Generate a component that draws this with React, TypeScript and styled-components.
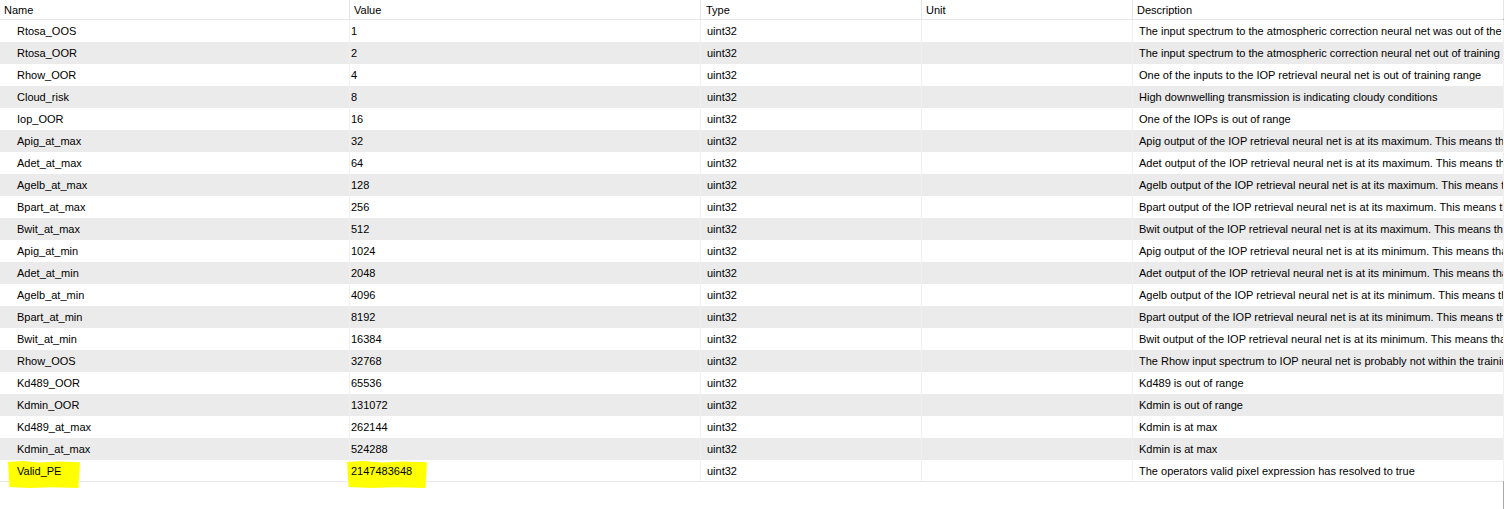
import React from "react";
import styled, { createGlobalStyle } from "styled-components";

const Global = createGlobalStyle`
  html, body { margin: 0; padding: 0; background: #ffffff; }
  body { font-family: "Liberation Sans", Arial, sans-serif; font-size: 11px; color: #000; }
`;

const Frame = styled.div`
  width: 1506px;
  height: 509px;
  display: flex;
  background: #fff;
  overflow: hidden;
`;

const Table = styled.div`
  width: 1504px;
  border-right: 1px solid #a9a9a9;
  box-sizing: border-box;
  display: flex;
  flex-direction: column;
`;

const COLS = "350px 351px 221px 211px 371px";

const HeaderRow = styled.div`
  display: grid;
  grid-template-columns: ${COLS};
  height: 20px;
  box-sizing: border-box;
  border-bottom: 1px solid #e5e5e5;
`;

const HeaderCell = styled.div<{ $pad: number }>`
  display: flex;
  align-items: center;
  padding-left: ${(p) => p.$pad}px;
  border-right: 1px solid #e5e5e5;
  white-space: nowrap;
  overflow: hidden;
`;

const Row = styled.div<{ $alt: boolean; $last: boolean }>`
  display: grid;
  grid-template-columns: ${COLS};
  height: 22px;
  box-sizing: border-box;
  background: ${(p) => (p.$alt ? "#ebebeb" : "#ffffff")};
  border-bottom: ${(p) => (p.$last ? "1px solid #e8e8e8" : "none")};
`;

const Cell = styled.div<{ $pad: number }>`
  position: relative;
  display: flex;
  align-items: center;
  padding-left: ${(p) => p.$pad}px;
  border-right: 1px solid #f0f0f0;
  white-space: nowrap;
  overflow: visible;
`;

const DescCell = styled(Cell)`
  overflow: hidden;
`;

const Text = styled.span`
  position: relative;
  z-index: 1;
`;

const Highlight = styled.span<{ $left: number; $width: number }>`
  position: absolute;
  left: ${(p) => p.$left}px;
  width: ${(p) => p.$width}px;
  top: 1px;
  height: 27px;
  background: #ffff00;
  z-index: 0;
  clip-path: polygon(0 4%, 20% 0, 45% 6%, 70% 2%, 100% 5%, 98% 100%, 60% 97%, 30% 100%, 2% 96%);
`;

type Flag = { name: string; value: string; desc: string; mark?: boolean };

const flags: Flag[] = [
  { name: "Rtosa_OOS", value: "1", desc: "The input spectrum to the atmospheric correction neural net was out of the scope of the training range and the inversion is likely to be wrong" },
  { name: "Rtosa_OOR", value: "2", desc: "The input spectrum to the atmospheric correction neural net out of training range" },
  { name: "Rhow_OOR", value: "4", desc: "One of the inputs to the IOP retrieval neural net is out of training range" },
  { name: "Cloud_risk", value: "8", desc: "High downwelling transmission is indicating cloudy conditions" },
  { name: "Iop_OOR", value: "16", desc: "One of the IOPs is out of range" },
  { name: "Apig_at_max", value: "32", desc: "Apig output of the IOP retrieval neural net is at its maximum. This means that the true value is this value or higher." },
  { name: "Adet_at_max", value: "64", desc: "Adet output of the IOP retrieval neural net is at its maximum. This means that the true value is this value or higher." },
  { name: "Agelb_at_max", value: "128", desc: "Agelb output of the IOP retrieval neural net is at its maximum. This means that the true value is this value or higher." },
  { name: "Bpart_at_max", value: "256", desc: "Bpart output of the IOP retrieval neural net is at its maximum. This means that the true value is this value or higher." },
  { name: "Bwit_at_max", value: "512", desc: "Bwit output of the IOP retrieval neural net is at its maximum. This means that the true value is this value or higher." },
  { name: "Apig_at_min", value: "1024", desc: "Apig output of the IOP retrieval neural net is at its minimum. This means that the true value is this value or lower." },
  { name: "Adet_at_min", value: "2048", desc: "Adet output of the IOP retrieval neural net is at its minimum. This means that the true value is this value or lower." },
  { name: "Agelb_at_min", value: "4096", desc: "Agelb output of the IOP retrieval neural net is at its minimum. This means that the true value is this value or lower." },
  { name: "Bpart_at_min", value: "8192", desc: "Bpart output of the IOP retrieval neural net is at its minimum. This means that the true value is this value or lower." },
  { name: "Bwit_at_min", value: "16384", desc: "Bwit output of the IOP retrieval neural net is at its minimum. This means that the true value is this value or lower." },
  { name: "Rhow_OOS", value: "32768", desc: "The Rhow input spectrum to IOP neural net is probably not within the training range of the neural net, and the inversion is likely to be wrong." },
  { name: "Kd489_OOR", value: "65536", desc: "Kd489 is out of range" },
  { name: "Kdmin_OOR", value: "131072", desc: "Kdmin is out of range" },
  { name: "Kd489_at_max", value: "262144", desc: "Kdmin is at max" },
  { name: "Kdmin_at_max", value: "524288", desc: "Kdmin is at max" },
  { name: "Valid_PE", value: "2147483648", desc: "The operators valid pixel expression has resolved to true", mark: true },
];

export default function App() {
  return (
    <>
      <Global />
      <Frame>
        <Table>
          <HeaderRow>
            <HeaderCell $pad={4}>Name</HeaderCell>
            <HeaderCell $pad={4}>Value</HeaderCell>
            <HeaderCell $pad={5}>Type</HeaderCell>
            <HeaderCell $pad={4}>Unit</HeaderCell>
            <HeaderCell $pad={4}>Description</HeaderCell>
          </HeaderRow>
          {flags.map((f, i) => (
            <Row key={f.name} $alt={i % 2 === 1} $last={i === flags.length - 1}>
              <Cell $pad={17}>
                {f.mark && <Highlight $left={8} $width={72} />}
                <Text>{f.name}</Text>
              </Cell>
              <Cell $pad={1}>
                {f.mark && <Highlight $left={-3} $width={80} />}
                <Text>{f.value}</Text>
              </Cell>
              <Cell $pad={6}>
                <Text>uint32</Text>
              </Cell>
              <Cell $pad={4} />
              <DescCell $pad={6}>
                <Text>{f.desc}</Text>
              </DescCell>
            </Row>
          ))}
        </Table>
      </Frame>
    </>
  );
}
